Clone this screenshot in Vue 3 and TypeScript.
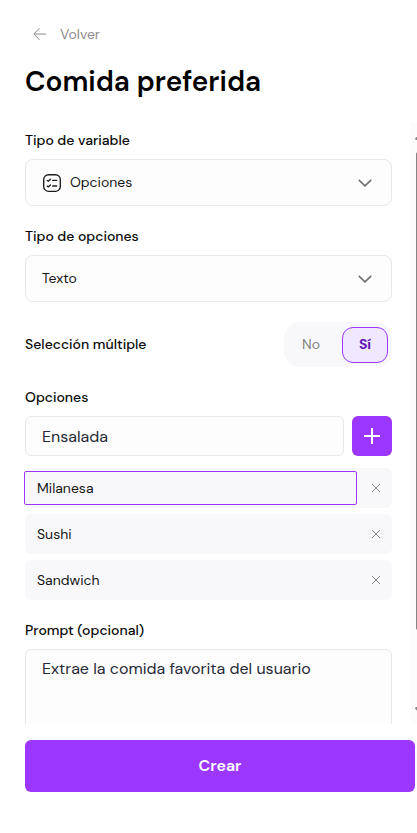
<script setup lang="ts">
import { ref } from 'vue'

const selects = [
  { label: 'Tipo de variable', value: 'Opciones', icon: true },
  { label: 'Tipo de opciones', value: 'Texto', icon: false },
]
const multiple = ref(true)
const draft = ref('Ensalada')
const prompt = ref('Extrae la comida favorita del usuario')
const options = ref<string[]>(['Milanesa', 'Sushi', 'Sandwich'])
const editing = ref(0)

function addOption(): void {
  const value = draft.value.trim()
  if (value) options.value.push(value)
}
function removeOption(index: number): void {
  options.value.splice(index, 1)
}
</script>

<template>
  <main class="page">
    <header class="header">
      <button class="back" type="button">
        <svg width="14" height="14" viewBox="0 0 14 14" fill="none" stroke="currentColor">
          <path d="M13.2 7H.9M6.5 1.2.8 7l5.7 5.8" />
        </svg>
        <span>Volver</span>
      </button>
      <h1>Comida preferida</h1>
    </header>

    <div class="viewport">
      <form class="form" @submit.prevent>
        <section v-for="field in selects" :key="field.label" class="field">
          <div class="label">{{ field.label }}</div>
          <div class="select">
            <svg v-if="field.icon" class="list-icon" width="20" height="20" viewBox="0 0 20 20" fill="none" stroke="#1c1c1c" stroke-width="1.35" stroke-linecap="round" stroke-linejoin="round">
              <rect x="1.7" y="1.7" width="16.6" height="16.6" rx="4.8" />
              <path d="M10.7 7.4h4M10.7 13h4M5.3 7.5l1 .8 2.1-2M5.3 13.1l1 .8 2.1-2" />
            </svg>
            <span class="select-value">{{ field.value }}</span>
            <svg width="14" height="8" viewBox="0 0 14 8" fill="none" stroke="#6d6d6d" stroke-width="1.5">
              <path d="m.8.9 6.2 6 6.2-6" />
            </svg>
          </div>
        </section>

        <section class="toggle-row">
          <div class="label">Selección múltiple</div>
          <div class="toggle">
            <button type="button" :class="{ active: !multiple }" @click="multiple = false">No</button>
            <button type="button" :class="{ active: multiple }" @click="multiple = true">Sí</button>
          </div>
        </section>

        <section class="options">
          <div class="label">Opciones</div>
          <div class="add-row">
            <input v-model="draft" class="draft" type="text" />
            <button class="add" type="button" aria-label="Agregar" @click="addOption">
              <svg width="16" height="16" viewBox="0 0 16 16" stroke="#fff" stroke-width="2">
                <path d="M8 0v16M0 8h16" />
              </svg>
            </button>
          </div>
          <ul class="list">
            <li v-for="(option, i) in options" :key="option" class="item">
              <span class="item-text" :class="{ editing: i === editing }" @click="editing = i">{{ option }}</span>
              <button class="remove" type="button" aria-label="Quitar" @click="removeOption(i)">
                <svg width="10" height="10" viewBox="0 0 10 10" stroke="#808080" stroke-width="0.95">
                  <path d="m1 1 8 8M9 1 1 9" />
                </svg>
              </button>
            </li>
          </ul>
        </section>

        <section class="prompt">
          <div class="label">Prompt (opcional)</div>
          <textarea v-model="prompt" class="prompt-input"></textarea>
        </section>
      </form>

      <div class="scrollbar">
        <svg width="7" height="5" viewBox="0 0 7 5"><path d="M3.5 0 7 3.5 6.2 5H.8L0 3.500z" fill="#858585" /></svg>
        <div class="thumb"></div>
        <svg width="7" height="5" viewBox="0 0 7 5"><path d="M3.500 5 7 1.500 6.200 0H.8L0 1.500z" fill="#858585" /></svg>
      </div>
    </div>

    <button class="create" type="button">Crear</button>
  </main>
</template>

<style>
body {
  background: #fff;
  overflow: hidden;
}
</style>

<style scoped>
* {
  box-sizing: border-box;
}
button,
input,
textarea {
  font: inherit;
  letter-spacing: inherit;
  margin: 0;
  border: 0;
  outline: 0;
}
button {
  padding: 0;
  background: none;
}
svg {
  display: block;
  flex: none;
}
.page {
  width: 417px;
  height: 833px;
  padding-left: 25px;
  overflow: hidden;
  display: flex;
  flex-direction: column;
  font-family: 'DM Sans', Inter, sans-serif;
  font-size: 14px;
  color: #171717;
}
.header {
  height: 122px;
  padding-top: 24px;
  flex: none;
}
.back {
  display: flex;
  align-items: center;
  gap: 13px;
  height: 20px;
  padding-left: 8px;
  color: #8c8c8c;
}
h1 {
  margin: 18px 0 0;
  font-size: 28px;
  line-height: 40px;
  font-weight: 600;
  color: #000;
}
.viewport {
  height: 602px;
  flex: none;
  overflow: hidden;
  display: grid;
  grid-template-columns: 368px 15px;
  grid-template-rows: 602px;
  column-gap: 19px;
  margin-left: -1px;
}
.form {
  padding: 8px 0 0 1px;
  min-width: 0;
}
.field {
  margin-bottom: 20px;
}
.label {
  line-height: 20px;
  font-weight: 500;
  color: #0a0a0a;
}
.select {
  display: flex;
  align-items: center;
  height: 47px;
  margin-top: 9px;
  padding: 0 19px 0 16px;
  border: 1px solid #e8e8e8;
  border-radius: 8px;
  background: #fdfdfd;
}
.list-icon {
  margin-right: 8px;
}
.select-value {
  flex: 1;
  padding-bottom: 2px;
}
.toggle-row {
  display: flex;
  align-items: center;
  justify-content: space-between;
  height: 45px;
}
.toggle-row .label {
  padding-bottom: 1px;
}
.toggle {
  display: flex;
  align-items: center;
  gap: 4px;
  height: 45px;
  padding-right: 4px;
  border-radius: 16px;
  background: #f8f8fb;
}
.toggle button {
  width: 54px;
  height: 36px;
  padding-bottom: 2px;
  border: 1px solid transparent;
  border-radius: 11px;
  color: #808080;
}
.toggle button.active {
  width: 46px;
  border-color: #9b37ff;
  background: #efe8ff;
  color: #6514b8;
  font-weight: 700;
}
.options {
  margin-top: 20px;
}
.add-row {
  display: flex;
  gap: 8px;
  margin-top: 9px;
}
.draft {
  width: 319px;
  height: 40px;
  padding: 0 16px;
  border: 1px solid #e8e8e8;
  border-radius: 6px;
  background: #fdfdfd;
  font-size: 16px;
  color: #262936;
}
.add {
  display: grid;
  place-items: center;
  width: 40px;
  height: 40px;
  border-radius: 6px;
  background: #9b37ff;
}
.list {
  list-style: none;
  margin: 12px 0 0;
  padding: 0;
  display: grid;
  gap: 6px;
}
.item {
  display: flex;
  align-items: center;
  justify-content: space-between;
  height: 40px;
  padding-right: 11px;
  border-radius: 6px;
  background: #f8f8fb;
}
.item-text {
  width: 333px;
  height: 34px;
  margin-left: -1px;
  padding: 0 12px;
  border: 1px solid transparent;
  border-radius: 2px;
  line-height: 32px;
}
.item-text.editing {
  border-color: #9b37ff;
}
.prompt {
  margin-top: 20px;
}
.prompt-input {
  display: block;
  width: 100%;
  height: 120px;
  margin-top: 9px;
  padding: 7px 16px;
  border: 1px solid #e8e8e8;
  border-radius: 6px;
  background: #fdfdfd;
  font-size: 16px;
  line-height: 24px;
  color: #262936;
  resize: none;
  overflow: hidden;
}
.scrollbar {
  display: flex;
  flex-direction: column;
  align-items: center;
  padding: 13px 0 12px;
  background: #fcfcfc;
}
.thumb {
  width: 5px;
  height: 478px;
  margin: 12px 0 auto;
  border-radius: 2px;
  background: #858585;
}
.create {
  width: 390px;
  height: 52px;
  margin-top: 16px;
  padding-bottom: 2px;
  flex: none;
  border-radius: 6px;
  background: #9b37ff;
  color: #fff;
  font-size: 16px;
  font-weight: 600;
}
</style>
